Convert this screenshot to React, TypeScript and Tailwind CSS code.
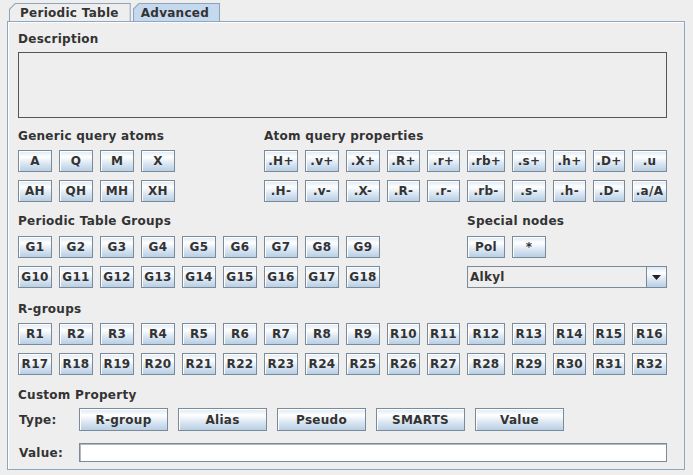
import React from 'react';

// column template shared by all button blocks (16 columns)
const COLS =
  'grid grid-cols-[34px_34px_34px_34px_34px_34px_34px_34px_34px_33px_33px_38px_34px_33px_32px_35px] gap-x-[7px]';

const generic = [['A', 'Q', 'M', 'X'], ['AH', 'QH', 'MH', 'XH']];
const atomProps = [
  ['.H+', '.v+', '.X+', '.R+', '.r+', '.rb+', '.s+', '.h+', '.D+', '.u'],
  ['.H-', '.v-', '.X-', '.R-', '.r-', '.rb-', '.s-', '.h-', '.D-', '.a/A'],
];
const groups1 = Array.from({ length: 9 }, (_, i) => `G${i + 1}`);
const groups2 = Array.from({ length: 9 }, (_, i) => `G${i + 10}`);
const rgroups1 = Array.from({ length: 16 }, (_, i) => `R${i + 1}`);
const rgroups2 = Array.from({ length: 16 }, (_, i) => `R${i + 17}`);

function Btn({ children, className = '' }: { children: React.ReactNode; className?: string }) {
  return (
    <button
      className={`h-[22px] border border-[#7a8a99] bg-[linear-gradient(to_bottom,#dde8f3_0%,#ffffff_30%,#dde8f3_60%,#b8cfe5_100%)] shadow-[inset_1px_1px_0_#ffffff] text-[12px] font-bold leading-none text-[#333333] whitespace-nowrap flex items-center justify-center ${className}`}
    >
      {children}
    </button>
  );
}

function Label({ children }: { children: React.ReactNode }) {
  return <div className="text-[12px] font-bold leading-[15px] text-[#333333] whitespace-nowrap">{children}</div>;
}

function Tab({ label, selected }: { label: string; selected?: boolean }) {
  return (
    <div className="h-[18px] bg-[#8fa3b8] [clip-path:polygon(6px_0,100%_0,100%_100%,0_100%,0_6px)] pt-[1px] px-[1px]">
      <div
        className={`h-full [clip-path:polygon(5.5px_0,100%_0,100%_100%,0_100%,0_5.5px)] flex items-center text-[12px] font-bold leading-none text-[#333333] ${
          selected ? 'bg-[#c4d8ee] pl-[7px] pr-[10px]' : 'bg-[#eeeeee] pl-[10px] pr-[11px]'
        }`}
      >
        {label}
      </div>
    </div>
  );
}

export default function App() {
  return (
    <div className="w-[693px] h-[475px] bg-[#eeeeee] font-['DejaVu_Sans',sans-serif] tracking-[0.28px] overflow-hidden">
      <div className="pt-[3px] pl-[9px] flex gap-[2px]">
        <Tab label="Periodic Table" />
        <Tab label="Advanced" selected />
      </div>

      <div className="ml-[7px] w-[678px] h-[449px] border border-[#8fa6c0] shadow-[inset_1px_1px_0_#ffffff] pl-[10px] pt-[10px]">
        <Label>Description</Label>
        <div className="mt-[5px] w-[649px] h-[66px] border border-[#555555] bg-[#eeeeee]" />

        {/* generic query atoms + atom query properties */}
        <div className={`${COLS} mt-[11px]`}>
          <div className="col-span-6">
            <Label>Generic query atoms</Label>
          </div>
          <div className="col-span-10">
            <Label>Atom query properties</Label>
          </div>
        </div>
        {[0, 1].map((r) => (
          <div key={r} className={`${COLS} ${r === 0 ? 'mt-[6px]' : 'mt-[8px]'}`}>
            {generic[r].map((t) => (
              <Btn key={t}>{t}</Btn>
            ))}
            <div />
            <div />
            {atomProps[r].map((t) => (
              <Btn key={t}>{t}</Btn>
            ))}
          </div>
        ))}

        {/* periodic table groups + special nodes */}
        <div className={`${COLS} mt-[12px]`}>
          <div className="col-span-11">
            <Label>Periodic Table Groups</Label>
          </div>
          <div className="col-span-5">
            <Label>Special nodes</Label>
          </div>
        </div>
        <div className={`${COLS} mt-[7px]`}>
          {groups1.map((t) => (
            <Btn key={t}>{t}</Btn>
          ))}
          <div />
          <div />
          <Btn>Pol</Btn>
          <Btn>*</Btn>
        </div>
        <div className={`${COLS} mt-[8px]`}>
          {groups2.map((t) => (
            <Btn key={t}>{t}</Btn>
          ))}
          <div />
          <div />
          <div className="col-span-5 h-[22px] flex border border-[#7a8a99] bg-[#eeeeee]">
            <div className="flex-1 flex items-center pl-[2px] text-[12px] font-bold leading-none text-[#333333]">Alkyl</div>
            <div className="w-[20px] h-full border-l border-[#7a8a99] bg-[linear-gradient(to_bottom,#dde8f3_0%,#ffffff_30%,#dde8f3_60%,#b8cfe5_100%)] flex items-center justify-center">
              <svg width="9" height="5" viewBox="0 0 9 5">
                <polygon points="0,0 9,0 4.5,5" fill="#222222" />
              </svg>
            </div>
          </div>
        </div>

        {/* r-groups */}
        <div className="mt-[14px]">
          <Label>R-groups</Label>
        </div>
        <div className={`${COLS} mt-[6px]`}>
          {rgroups1.map((t) => (
            <Btn key={t}>{t}</Btn>
          ))}
        </div>
        <div className={`${COLS} mt-[8px]`}>
          {rgroups2.map((t) => (
            <Btn key={t}>{t}</Btn>
          ))}
        </div>

        {/* custom property */}
        <div className="mt-[13px]">
          <Label>Custom Property</Label>
        </div>
        <div className="mt-[5px] flex items-center">
          <div className="w-[61px] pl-[1px] text-[12px] font-bold text-[#333333]">Type:</div>
          <div className="flex gap-[10px]">
            {['R-group', 'Alias', 'Pseudo', 'SMARTS', 'Value'].map((t) => (
              <Btn key={t} className="w-[89px] h-[23px]">
                {t}
              </Btn>
            ))}
          </div>
        </div>
        <div className="mt-[12px] flex items-center">
          <div className="w-[61px] pl-[1px] text-[12px] font-bold text-[#333333]">Value:</div>
          <div className="w-[588px] h-[19px] border border-[#7a8a99] bg-white shadow-[inset_1px_1px_0_#b0b8c0]" />
        </div>
      </div>
    </div>
  );
}
